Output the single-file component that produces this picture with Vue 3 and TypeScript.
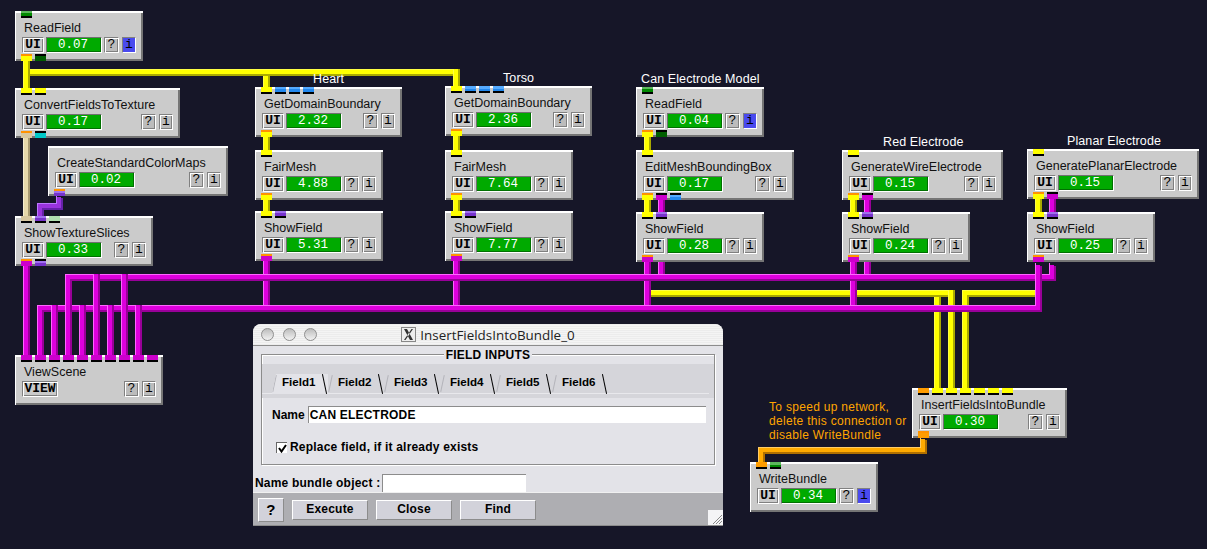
<template>
  <div class="canvas">
    <!-- network wires, layered so crossings come out right -->
    <svg class="wires" width="1207" height="549" shape-rendering="crispEdges">
      <g v-for="(w, i) in wires" :key="i" fill="none" stroke-linejoin="miter">
        <path :d="w.d" :stroke="palette[w.color].dark" stroke-width="7" />
        <path :d="w.d" :stroke="palette[w.color].core" stroke-width="5" :transform="w.stub ? 'translate(-1 0)' : 'translate(-1 -1)'" />
        <path :d="w.d" :stroke="palette[w.color].light" stroke-width="1" :transform="w.stub ? 'translate(-3 0)' : 'translate(-3 -3)'" />
      </g>
    </svg>

    <div
      v-for="m in modules"
      :key="m.title + m.x"
      class="module"
      :style="{ left: m.x + 'px', top: m.y + 'px', width: m.w + 'px' }"
    >
      <div class="ports in">
        <span v-for="(p, i) in m.inputs" :key="i" class="port" :class="p"></span>
      </div>
      <div class="mod-title">{{ m.title }}</div>
      <div class="mod-row">
        <div class="btn ui" :class="{ view: m.view }">{{ m.view ? 'VIEW' : 'UI' }}</div>
        <div v-if="!m.view" class="gauge">{{ m.time }}</div>
        <div class="btn small push">?</div>
        <div class="btn small" :class="{ blue: m.blue }">i</div>
      </div>
      <div class="ports out">
        <span v-for="(p, i) in m.outputs" :key="i" class="port" :class="[p, { lit: i === 0 }]"></span>
      </div>
    </div>

    <div v-for="l in labels" :key="l.text" class="label" :style="{ left: l.x + 'px', top: l.y + 'px' }">{{ l.text }}</div>

    <div class="note">
      To speed up network,<br />delete this connection or<br />disable WriteBundle
    </div>

    <!-- dialog window -->
    <div class="window">
      <div class="titlebar">
        <div class="lights"><i></i><i></i><i></i></div>
        <svg class="x-icon" width="15" height="15" viewBox="0 0 15 15">
          <rect x="0.5" y="0.5" width="14" height="14" fill="#eee" stroke="#888" />
          <path d="M3 2 L6 2 L12 13 L9 13 Z M12 2 L10.5 2 L3 13 L4.5 13 Z" fill="#333" />
        </svg>
        <span class="win-title">InsertFieldsIntoBundle_0</span>
      </div>
      <div class="group">
        <div class="legend">FIELD INPUTS</div>
        <div class="tabbar">
          <div class="tabs">
            <div v-for="(t, i) in tabs" :key="t" class="tab" :class="{ active: i === 0 }">{{ t }}</div>
          </div>
        </div>
        <div class="name-row">
          <span>Name</span>
          <div class="entry">CAN ELECTRODE</div>
        </div>
        <div class="check-row">
          <span class="check">
            <svg width="11" height="11" viewBox="0 0 11 11"><path d="M2 5 L4.5 8.5 L9 2" fill="none" stroke="#000" stroke-width="2" /></svg>
          </span>
          <span>Replace field, if it already exists</span>
        </div>
      </div>
      <div class="bundle-row">
        <span>Name bundle object :</span>
        <div class="entry bundle"></div>
      </div>
      <div class="footer">
        <div class="fbtn help">?</div>
        <div class="fbtn">Execute</div>
        <div class="fbtn">Close</div>
        <div class="fbtn">Find</div>
        <svg class="grip" width="15" height="15" viewBox="0 0 15 15">
          <rect width="15" height="15" fill="#f4f4f6" />
          <path d="M14 5 L5 14 M14 8 L8 14 M14 11 L11 14" stroke="#888" />
        </svg>
      </div>
    </div>
  </div>
</template>

<script setup lang="ts">
type WireColor = 'yellow' | 'magenta' | 'purple' | 'beige' | 'orange'

interface Mod {
  title: string
  x: number
  y: number
  w: number
  time?: string
  blue?: boolean
  view?: boolean
  inputs: string[]
  outputs: string[]
}

const palette: Record<WireColor, { core: string; dark: string; light: string }> = {
  yellow: { core: '#ffff00', dark: '#aaaa00', light: '#ffff44' },
  magenta: { core: '#dd00dd', dark: '#990099', light: '#ff66ff' },
  purple: { core: '#9933dd', dark: '#6622aa', light: '#bb77ff' },
  beige: { core: '#e6d8aa', dark: '#a89a72', light: '#f4ecd0' },
  orange: { core: '#ffaa00', dark: '#b07000', light: '#ffcc66' }
}

// points are the top-left pixel of the 7px pipe
function wire(color: WireColor, ...pts: [number, number][]) {
  const d = pts.map((p, i) => `${i ? 'L' : 'M'}${p[0] + 3.5} ${p[1] + 3.5}`).join(' ')
  return { color, d, stub: false }
}
// vertical stub, exact pixel ends
function drop(color: WireColor, x: number, y1: number, y2: number) {
  return { color, d: `M${x + 3.5} ${y1} L${x + 3.5} ${y2}`, stub: true }
}

const wires = [
  // yellow
  drop('yellow', 263, 72, 90),
  wire('yellow', [23, 69], [453, 69], [453, 86]),
  drop('yellow', 23, 61, 90),
  drop('yellow', 263, 137, 152),
  drop('yellow', 263, 200, 213),
  drop('yellow', 453, 136, 152),
  drop('yellow', 453, 200, 213),
  drop('yellow', 644, 137, 152),
  drop('yellow', 644, 200, 214),
  drop('yellow', 850, 200, 214),
  drop('yellow', 1035, 199, 214),
  drop('yellow', 934, 294, 390),
  wire('yellow', [647, 290], [948, 290], [948, 390]),
  wire('yellow', [1035, 290], [962, 290], [962, 390]),

  drop('beige', 23, 138, 218),
  wire('purple', [56, 194], [56, 203], [37, 203], [37, 218]),
  wire('orange', [920, 436], [920, 447], [758, 447], [758, 464]),

  // magenta stubs between modules
  drop('magenta', 658, 200, 214),
  drop('magenta', 864, 200, 214),
  drop('magenta', 1049, 199, 214),
  drop('magenta', 23, 266, 357),

  // lower bus
  drop('magenta', 263, 261, 306),
  drop('magenta', 453, 261, 306),
  drop('magenta', 644, 262, 306),
  drop('magenta', 850, 262, 306),
  wire('magenta', [1035, 262], [1035, 305], [37, 305], [37, 357]),
  drop('magenta', 51, 305, 357),
  drop('magenta', 79, 305, 357),
  drop('magenta', 107, 305, 357),
  drop('magenta', 135, 305, 357),

  // upper bus
  drop('magenta', 658, 262, 276),
  drop('magenta', 864, 262, 276),
  wire('magenta', [1049, 262], [1049, 274], [65, 274], [65, 357]),
  drop('magenta', 93, 274, 357),
  drop('magenta', 121, 274, 357),

  // right riser of the lower bus passes over the upper bus
  wire('magenta', [1035, 262], [1035, 305], [1000, 305])
]

const modules: Mod[] = [
  { title: 'ReadField', x: 15, y: 11, w: 128, time: '0.07', blue: true, inputs: ['green'], outputs: ['yellow', 'dkgreen'] },
  { title: 'ConvertFieldsToTexture', x: 15, y: 88, w: 165, time: '0.17', inputs: ['yellow', 'yellow'], outputs: ['beige', 'cyan'] },
  { title: 'CreateStandardColorMaps', x: 48, y: 146, w: 180, time: '0.02', inputs: [], outputs: ['purple'] },
  { title: 'ShowTextureSlices', x: 15, y: 216, w: 138, time: '0.33', inputs: ['beige', 'purple', 'ltgreen'], outputs: ['magenta', 'purple'] },
  { title: 'ViewScene', x: 15, y: 355, w: 148, view: true, inputs: Array(10).fill('magenta'), outputs: [] },
  { title: 'GetDomainBoundary', x: 255, y: 87, w: 147, time: '2.32', inputs: ['yellow', 'blue', 'blue', 'blue'], outputs: ['yellow'] },
  { title: 'FairMesh', x: 255, y: 150, w: 128, time: '4.88', inputs: ['yellow'], outputs: ['yellow'] },
  { title: 'ShowField', x: 255, y: 211, w: 128, time: '5.31', inputs: ['yellow', 'purple'], outputs: ['magenta'] },
  { title: 'GetDomainBoundary', x: 445, y: 86, w: 147, time: '2.36', inputs: ['yellow', 'blue', 'blue', 'blue'], outputs: ['yellow'] },
  { title: 'FairMesh', x: 445, y: 150, w: 128, time: '7.64', inputs: ['yellow'], outputs: ['yellow'] },
  { title: 'ShowField', x: 445, y: 211, w: 128, time: '7.77', inputs: ['yellow', 'purple'], outputs: ['magenta'] },
  { title: 'ReadField', x: 636, y: 87, w: 128, time: '0.04', blue: true, inputs: ['green'], outputs: ['yellow', 'dkgreen'] },
  { title: 'EditMeshBoundingBox', x: 636, y: 150, w: 158, time: '0.17', inputs: ['yellow'], outputs: ['yellow', 'magenta', 'blue'] },
  { title: 'ShowField', x: 636, y: 212, w: 128, time: '0.28', inputs: ['yellow', 'purple'], outputs: ['magenta'] },
  { title: 'GenerateWireElectrode', x: 842, y: 150, w: 161, time: '0.15', inputs: ['yellow'], outputs: ['yellow', 'magenta'] },
  { title: 'ShowField', x: 842, y: 212, w: 128, time: '0.24', inputs: ['yellow', 'purple'], outputs: ['magenta'] },
  { title: 'GeneratePlanarElectrode', x: 1027, y: 149, w: 172, time: '0.15', inputs: ['yellow'], outputs: ['yellow', 'magenta'] },
  { title: 'ShowField', x: 1027, y: 212, w: 128, time: '0.25', inputs: ['yellow', 'purple'], outputs: ['magenta'] },
  { title: 'InsertFieldsIntoBundle', x: 912, y: 388, w: 155, time: '0.30', inputs: ['orange', 'yellow', 'yellow', 'yellow', 'yellow', 'yellow', 'yellow'], outputs: ['orange'] },
  { title: 'WriteBundle', x: 750, y: 462, w: 128, time: '0.34', blue: true, inputs: ['orange', 'green'], outputs: [] }
]

const labels = [
  { text: 'Heart', x: 313, y: 72 },
  { text: 'Torso', x: 503, y: 71 },
  { text: 'Can Electrode Model', x: 641, y: 72 },
  { text: 'Red Electrode', x: 883, y: 135 },
  { text: 'Planar Electrode', x: 1067, y: 134 }
]

const tabs = ['Field1', 'Field2', 'Field3', 'Field4', 'Field5', 'Field6']
</script>

<style scoped>
.canvas {
  position: relative;
  width: 1207px;
  height: 549px;
  overflow: hidden;
  background: #161628;
  font-family: "Liberation Sans", Arial, sans-serif;
}

.wires {
  position: absolute;
  left: 0;
  top: 0;
}

.module {
  position: absolute;
  height: 50px;
  box-sizing: border-box;
  background: #cbcbcb;
  box-shadow: inset 1px 2px 0 #fff, inset -2px -2px 0 #757575;
  color: #111;
}

.mod-title {
  height: 26px;
  padding: 10px 0 0 9px;
  box-sizing: border-box;
  font-size: 12.5px;
  line-height: 15px;
  white-space: nowrap;
}

.mod-row {
  display: flex;
  gap: 2px;
  padding: 0 7px;
}

.btn {
  height: 16px;
  box-sizing: border-box;
  border: 1px solid;
  border-color: #808080 #fff #fff #808080;
  box-shadow: inset 1px 1px 0 #fff, inset -1px -1px 0 #808080;
  background: #bcbcbc;
  font-family: "Liberation Mono", monospace;
  font-size: 12px;
  line-height: 14px;
  text-align: center;
  color: #000;
}

.ui {
  width: 22px;
  background: #cacaca;
  font-weight: bold;
  font-size: 13px;
}

.ui.view {
  width: 36px;
}

.small {
  width: 14px;
  font-size: 13px;
  margin-left: 1px;
}

.small.push {
  margin-left: auto;
  width: 15px;
}

.small.blue {
  background: #4a4aee;
  box-shadow: none;
}

.gauge {
  width: 56px;
  height: 16px;
  box-sizing: border-box;
  border: 1px solid;
  border-color: #707070 #fff #fff #707070;
  box-shadow: inset -1px -1px 0 #007000;
  background: #00aa00;
  padding-left: 11px;
  color: #fff;
  font-family: "Liberation Mono", monospace;
  font-size: 12.5px;
  line-height: 14px;
}

.ports {
  position: absolute;
  left: 6px;
  display: flex;
  gap: 3px;
}

.ports.in {
  top: 0;
}

.ports.out {
  bottom: 0;
}

.port {
  width: 11px;
  height: 7px;
  box-sizing: border-box;
  border: 0 solid #000;
}

.in .port {
  border-bottom-width: 2px;
}

.out .port {
  border-top-width: 2px;
}

.out .port.lit {
  border-top-color: #ff9200;
}

.port.yellow { background: #ffff00; }
.port.orange { background: #ff9c00; }
.port.magenta { background: #cc00cc; }
.port.beige { background: #d8c8a0; }
.port.cyan { background: #00c8c8; }
.port.purple { background: linear-gradient(#a070ee 0 40%, #7733cc 40% 100%); }
.port.green { background: linear-gradient(#5cb85c 0 50%, #008800 50% 100%); }
.port.dkgreen { background: #005f00; }
.port.ltgreen { background: #b0e0b0; }
.port.blue { background: linear-gradient(#55aaff 0 50%, #2288ee 50% 100%); }

.label,
.note {
  position: absolute;
  font-size: 12.5px;
  line-height: 14px;
  letter-spacing: 0.1px;
  white-space: nowrap;
}

.label {
  color: #fff;
}

.note {
  left: 769px;
  top: 400px;
  color: #ffa500;
  font-size: 12px;
  letter-spacing: 0.3px;
}

.window {
  position: absolute;
  left: 253px;
  top: 324px;
  width: 470px;
  height: 202px;
  display: flex;
  flex-direction: column;
  border-radius: 8px 8px 0 0;
  overflow: hidden;
  background: #e3e3e8;
  color: #000;
  font-size: 12px;
  font-weight: bold;
}

.titlebar {
  position: relative;
  height: 22px;
  flex: none;
  box-sizing: border-box;
  display: flex;
  align-items: center;
  justify-content: center;
  gap: 4px;
  border-bottom: 1px solid #8c8c8c;
  background: repeating-linear-gradient(#ececec 0 1px, #f4f4f4 1px 2px);
  font-weight: normal;
  font-family: "Open Sans", "Liberation Sans", sans-serif;
  font-size: 13.4px;
  color: #222;
}

.lights {
  position: absolute;
  left: 8px;
  top: 4px;
  display: flex;
  gap: 8.5px;
}

.lights i {
  width: 13px;
  height: 13px;
  box-sizing: border-box;
  border-radius: 50%;
  border: 1px solid #8f8f8f;
  background: linear-gradient(#bdbdbd, #f2f2f2);
}

.x-icon {
  flex: none;
}

.group {
  position: relative;
  height: 111px;
  margin: 8px 8px 0;
  flex: none;
  box-sizing: border-box;
  border: 1px solid #8c8c8c;
  box-shadow: inset 1px 1px 0 #fff, 1px 1px 0 #fff;
  padding-top: 9px;
}

.legend {
  position: absolute;
  left: 0;
  right: 0;
  top: -7px;
  width: max-content;
  margin: 0 auto;
  padding: 0 2px;
  background: #e3e3e8;
  font-size: 12px;
  line-height: 14px;
  letter-spacing: 0.2px;
}

.tabbar {
  height: 34px;
  box-sizing: border-box;
  padding: 10px 5px 4px 0;
  background: #d5d5da;
}

.tabs {
  display: flex;
  height: 20px;
  padding-left: 10px;
  box-shadow: inset 0 -1px 0 #e8e8ec;
}

.tab {
  position: relative;
  width: 56px;
  box-sizing: border-box;
  padding-left: 10px;
  line-height: 15px;
  font-size: 11.6px;
}

.tab.active {
  background: #e3e3e8;
  clip-path: polygon(4px 0, 60px 0, 60px 100%, 0 100%);
}

.tab::after {
  content: "";
  position: absolute;
  right: 3px;
  top: 0;
  width: 1px;
  height: 20px;
  background: #000;
  transform: rotate(-12deg);
}

.tab::before {
  content: "";
  position: absolute;
  left: 2px;
  top: 1px;
  width: 1px;
  height: 17px;
  background: #b4b4ba;
  transform: rotate(12deg);
}

.name-row {
  display: flex;
  align-items: center;
  gap: 3px;
  margin: 8px 8px 0 10px;
}

.entry {
  flex: 1;
  height: 17px;
  box-sizing: border-box;
  border-top: 1px solid #8c8c8c;
  border-left: 1px solid #8c8c8c;
  background: #fff;
  padding-left: 1px;
  line-height: 16px;
  letter-spacing: 0.2px;
}

.check-row {
  display: flex;
  align-items: center;
  gap: 3px;
  margin: 17px 0 0 14px;
  letter-spacing: 0.2px;
}

.check {
  display: block;
  width: 11px;
  height: 11px;
  box-sizing: border-box;
  border-top: 1px solid #666;
  border-left: 1px solid #666;
  background: #fff;
  line-height: 0;
}

.bundle-row {
  display: flex;
  align-items: center;
  gap: 2px;
  margin: 9px 0 0 2px;
  letter-spacing: 0.2px;
  white-space: nowrap;
}

.entry.bundle {
  flex: none;
  width: 144px;
  height: 18px;
}

.footer {
  position: relative;
  flex: 1;
  display: flex;
  align-items: center;
  gap: 8px;
  padding: 1px 0 0 5px;
  background: #aeaeb2;
  border-top: 1px solid #f0f0f0;
  border-bottom: 1px solid #8c8c8c;
  box-sizing: border-box;
}

.fbtn {
  width: 76px;
  height: 20px;
  box-sizing: border-box;
  border: 1px solid;
  border-color: #fff #8c8c8c #8c8c8c #fff;
  background: #d2d2da;
  text-align: center;
  line-height: 17px;
  letter-spacing: 0.2px;
}

.fbtn.help {
  width: 26px;
  height: 24px;
  font-size: 15px;
  line-height: 21px;
}

.grip {
  position: absolute;
  right: 0;
  bottom: 0;
}
</style>

<style>
html, body {
  margin: 0;
  background: #161628;
}
</style>
